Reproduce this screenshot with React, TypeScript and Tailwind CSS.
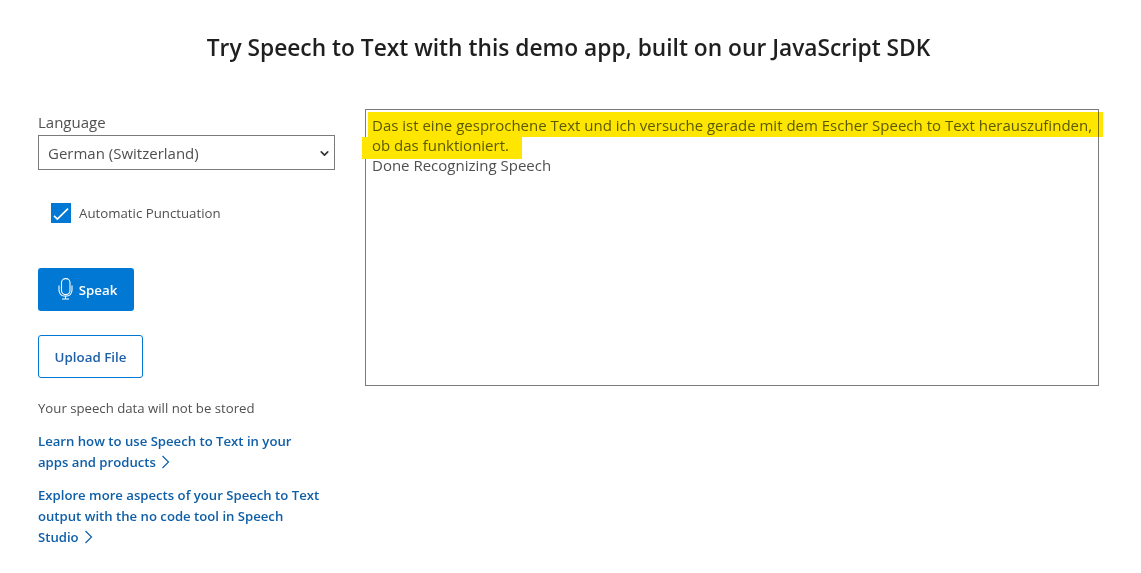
import { ChevronDown } from "lucide-react"

function MicIcon() {
  return (
    <svg width="15" height="22" viewBox="0 0 15 22" fill="none" stroke="currentColor" strokeWidth="1.1">
      <rect x="3.5" y="0.6" width="8.5" height="16" rx="4" />
      <path d="M1 7.5v4.5a5 6 0 0 0 5 6h3a5 6 0 0 0 5-6v-4.5" />
      <path d="M7.5 18v3M4 21h7" />
    </svg>
  )
}

function CheckMark() {
  return (
    <svg width="20" height="20" viewBox="0 0 20 20" fill="none" stroke="currentColor" strokeWidth="1.7">
      <path d="M3 12.8l3.4 3.3L17 5.6" />
    </svg>
  )
}

function LinkChevron() {
  return (
    <svg className="inline-block ml-[2px] -mt-[2px]" width="9" height="14" viewBox="0 0 9 14" fill="none" stroke="currentColor" strokeWidth="1.2">
      <path d="M1.5 1l6 6-6 6" />
    </svg>
  )
}

export default function App() {
  return (
    <div className="w-[1141px] h-[573px] overflow-hidden bg-white font-['Open_Sans','Noto_Sans',sans-serif] text-[#323130]">
      <h1 className="pt-[32px] pr-[4px] text-center text-[22.75px] leading-[31px] font-semibold text-[#1f1f1f]">
        Try Speech to Text with this demo app, built on our JavaScript SDK
      </h1>

      <div className="flex mt-[46px] pl-[38px]">
        <div className="w-[297px] shrink-0">
          <label className="block text-[15px] leading-5 mt-[3px] text-[#505050]">Language</label>
          <div className="mt-[3px] h-[35px] border border-[#7a7a7a] flex items-center justify-between pl-[9px] pr-[3px] pt-px text-[15px] text-[#505050]">
            <span>German (Switzerland)</span>
            <ChevronDown className="w-[13px] h-[13px] text-[#333333]" strokeWidth={3} />
          </div>

          <div className="flex items-center ml-[13px] mt-[33px] gap-2">
            <div className="w-5 h-5 bg-[#0078d4] flex items-center justify-center text-white">
              <CheckMark />
            </div>
            <span className="text-[13.25px] pt-px text-[#505050]">Automatic Punctuation</span>
          </div>

          <button className="mt-[44px] w-24 h-[43px] rounded-[3px] bg-[#0078d4] text-white text-[13.3px] font-semibold flex items-center justify-center gap-[6px] pl-[3px]">
            <MicIcon />
            <span className="pt-[4px]">Speak</span>
          </button>

          <button className="block mt-6 w-[105px] h-[43px] pt-[2px] rounded-[3px] border border-[#0078d4] text-[#1d5fa8] text-[13.35px] font-semibold">
            Upload File
          </button>

          <p className="mt-[21px] text-[13.2px] leading-[18px] text-[#505050]">Your speech data will not be stored</p>

          <a className="block mt-[14px] text-[13.15px] leading-[21px] font-semibold text-[#0f5fa8]">
            Learn how to use Speech to Text in your<br />
            apps and products <LinkChevron />
          </a>
          <a className="block mt-[12px] text-[13.15px] leading-[21px] font-semibold text-[#0f5fa8]">
            Explore more aspects of your Speech to Text<br />
            output with the no code tool in Speech<br />
            Studio <LinkChevron />
          </a>
        </div>

        <div className="relative ml-[30px] w-[734px] h-[277px] border border-[#7a7a7a] px-[6px] py-[5px] text-[15px] leading-5 text-[#505050] whitespace-nowrap">
          <div className="absolute left-[2px] top-[2px] w-[735px] h-[25px] bg-[#ffe600] mix-blend-multiply" />
          <div className="absolute -left-[4px] top-[27px] w-[160px] h-[22px] bg-[#ffe600]" />
          <div className="relative">
            <span className="text-[#5a5a00]">Das ist eine gesprochene Text und ich versuche gerade mit dem Escher Speech to Text herauszufinden,<br />
            ob das funktioniert.</span><br />
            Done Recognizing Speech
          </div>
        </div>
      </div>
    </div>
  )
}
